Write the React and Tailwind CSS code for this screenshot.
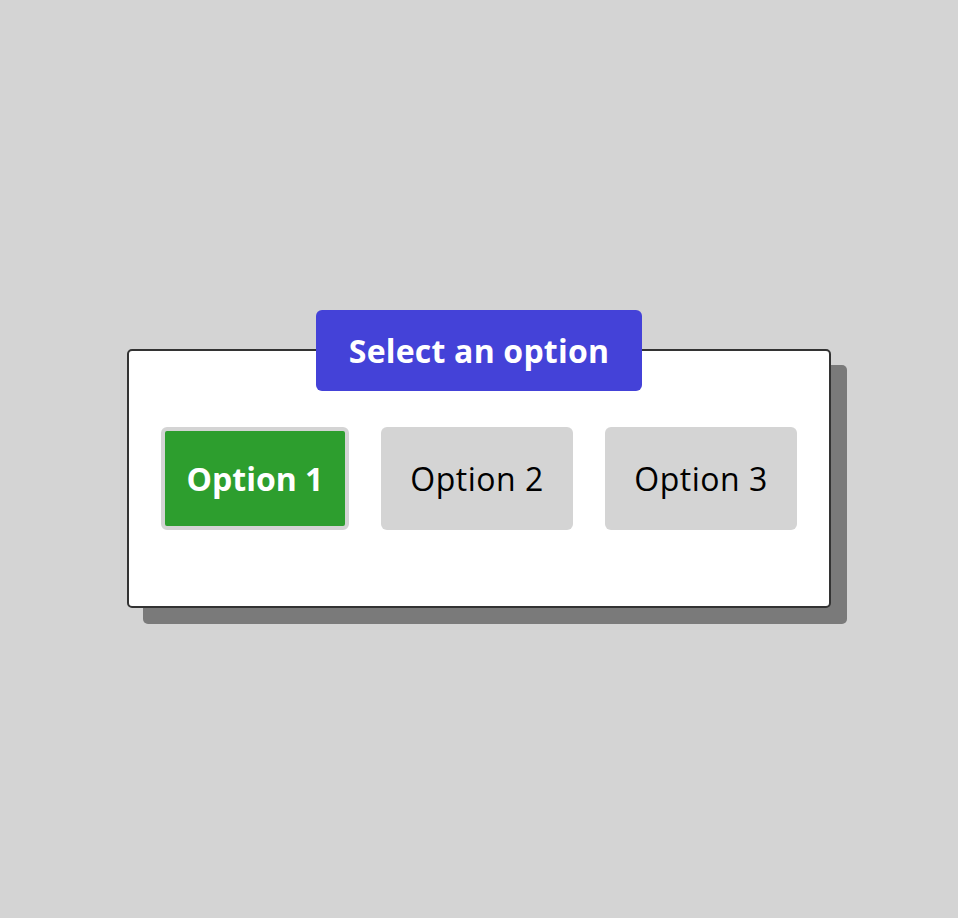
import React, { useState } from 'react';

const options = ['Option 1', 'Option 2', 'Option 3'];

const App = () => {
  const [selected, setSelected] = useState(0);

  return (
    <div className="min-h-[918px] w-full bg-[#d4d4d4] flex justify-center pt-[349px] font-['Open_Sans',sans-serif]">
      <div className="relative w-[704px] h-[259px]">
        {/* offset shadow */}
        <div className="absolute left-4 top-4 w-full h-full rounded-[5px] bg-[#7a7a7a]" />
        <div className="relative w-full h-full bg-white border-2 border-[#333333] rounded-[5px] flex items-center justify-between px-8">
          <div className="absolute left-1/2 top-[-41px] -translate-x-1/2 w-[326px] h-[81px] rounded-md bg-[#4442d8] flex items-center justify-center text-white text-[32px] font-bold tracking-[0.2px]">
            Select an option
          </div>
          {options.map((opt, i) => (
            <button
              key={opt}
              onClick={() => setSelected(i)}
              className={
                i === selected
                  ? 'h-[103px] w-[188px] rounded-md border-4 border-[#d4d4d4] bg-[#2d9e2e] text-white text-[32px] font-bold'
                  : 'h-[103px] w-[192px] rounded-md bg-[#d4d4d4] text-black text-[32px] tracking-[0.5px]'
              }
            >
              {opt}
            </button>
          ))}
        </div>
      </div>
    </div>
  );
};

export default App;
